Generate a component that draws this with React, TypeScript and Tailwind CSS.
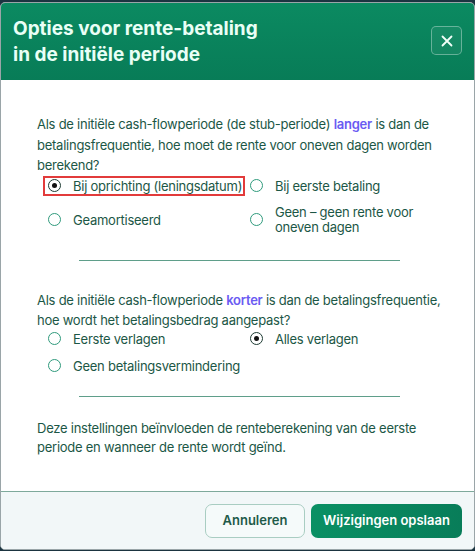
import React from "react";

function Radio({ checked }: { checked?: boolean }) {
  return (
    <span className={`flex h-[13px] w-[13px] shrink-0 items-center justify-center rounded-full border-[1.5px] ${checked ? "border-[#1d3b33]" : "border-[#2f9a7c]"} bg-white`}>
      {checked && <span className="h-[5px] w-[5px] rounded-full bg-[#111]" />}
    </span>
  );
}

function Option({ label, checked, highlight }: { label: React.ReactNode; checked?: boolean; highlight?: boolean }) {
  return (
    <div className={`flex items-center gap-[12px] ${highlight ? "-my-[2px] -ml-[5px] w-fit border-2 border-[#e23b3b] py-0 pl-[3px] pr-[1px]" : ""}`}>
      <Radio checked={checked} />
      <span className="whitespace-nowrap leading-[16px]">{label}</span>
    </div>
  );
}

export default function App() {
  return (
    <div className="h-[551px] w-[475px] overflow-hidden bg-[#1b3440] pt-[2px]" style={{ fontFamily: "Inter, 'Noto Sans', sans-serif" }}>
      <div className="flex h-[548px] flex-col overflow-hidden rounded-[5px] border border-[#9aa5a8] bg-white">
        <div className="flex h-[77px] shrink-0 items-start justify-between bg-gradient-to-b from-[#0b8a61] to-[#087c57] pl-[12px] pr-[12px] pt-[13px]">
          <h1 className="text-[19px] font-bold leading-[26px] text-[#e9fff6]">
            Opties voor rente-betaling
            <br />
            in de initiële periode
          </h1>
          <button className="mt-[10px] flex h-[29px] w-[31px] items-center justify-center rounded-[5px] border border-white/35 bg-white/5">
            <svg width="12" height="12" viewBox="0 0 12 12" fill="none" stroke="#f2fff9" strokeWidth="1.8" strokeLinecap="round">
              <path d="M1.5 1.5 10.5 10.5M10.5 1.5 1.5 10.5" />
            </svg>
          </button>
        </div>

        <div className="flex-1 pl-[36px] pr-[28px] pt-[34px] text-[13px] tracking-[-0.25px] text-[#1c5746]">
          <p className="leading-[20.5px]">
            Als de initiële cash-flowperiode (de stub-periode) <span className="font-semibold text-[#6a5bf2]">langer</span> is dan de betalingsfrequentie, hoe moet de rente voor oneven dagen worden berekend?
          </p>
          <div className="mt-[2px] grid grid-cols-[202px_1fr] gap-y-[11px] pl-[11px]">
            <Option label="Bij oprichting (leningsdatum)" checked highlight />
            <Option label="Bij eerste betaling" />
            <Option label="Geamortiseerd" />
            <div className="flex items-center gap-[12px]">
              <Radio />
              <span className="leading-[15px]">
                Geen – geen rente voor
                <br />
                oneven dagen
              </span>
            </div>
          </div>
          <div className="mx-auto mt-[25px] h-px w-[321px] -translate-x-[2px] bg-[#5f9e8a]" />

          <p className="mt-[29px] leading-[20.5px]">
            Als de initiële cash-flowperiode <span className="font-semibold text-[#6a5bf2]">korter</span> is dan de betalingsfrequentie, hoe wordt het betalingsbedrag aangepast?
          </p>
          <div className="mt-0 grid grid-cols-[202px_1fr] gap-y-[11px] pl-[11px]">
            <Option label="Eerste verlagen" />
            <Option label="Alles verlagen" checked />
            <Option label="Geen betalingsvermindering" />
          </div>
          <div className="mx-auto mt-[22px] h-px w-[321px] -translate-x-[2px] bg-[#5f9e8a]" />

          <p className="mt-[22px] leading-[19px]">
            Deze instellingen beïnvloeden de renteberekening van de eerste periode en wanneer de rente wordt geïnd.
          </p>
        </div>

        <div className="flex h-[58px] shrink-0 items-center justify-end gap-[6px] border-t border-[#7ea99b] bg-[#f2f7f8] pr-[12px]">
          <button className="h-[34px] w-[100px] rounded-[7px] border border-[#a9cdc2] bg-[#f5fafa] text-[13px] font-semibold text-[#1e5a49]">
            Annuleren
          </button>
          <button className="h-[34px] w-[151px] rounded-[7px] bg-gradient-to-r from-[#0a9064] to-[#087d59] text-[13px] font-semibold text-white">
            Wijzigingen opslaan
          </button>
        </div>
      </div>
    </div>
  );
}
